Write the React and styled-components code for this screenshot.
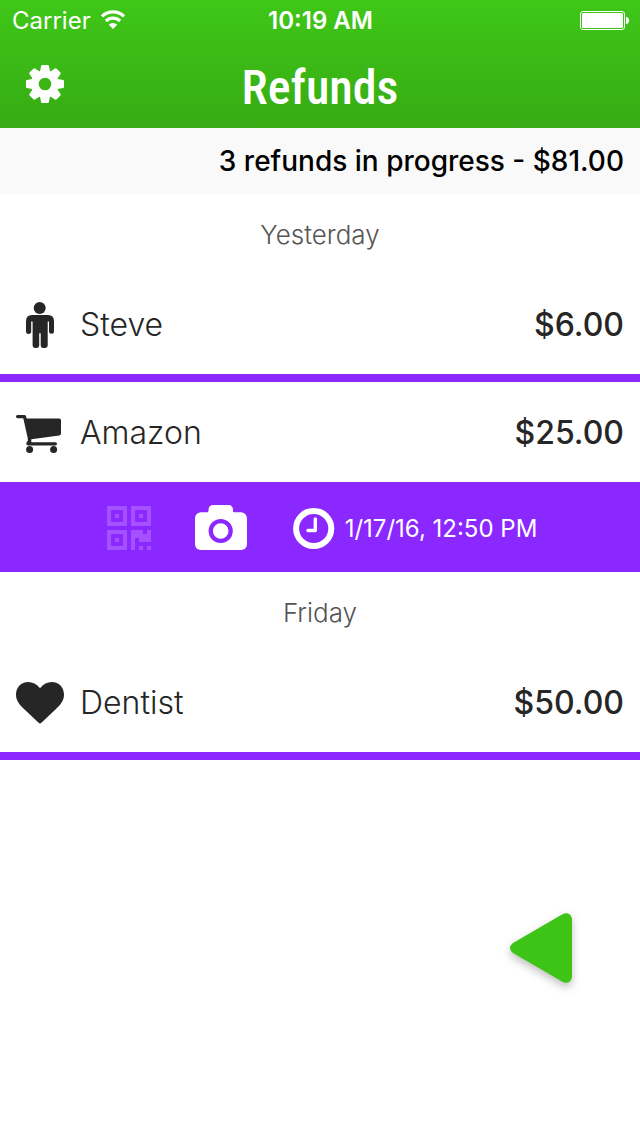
import styled, { createGlobalStyle } from "styled-components";

const groups = [
    {
        day: "Yesterday",
        refunds: [
            { name: "Steve", amount: "$6.00", icon: PersonIcon },
            { name: "Amazon", amount: "$25.00", icon: CartIcon, date: "1/17/16, 12:50 PM" },
        ],
    },
    {
        day: "Friday",
        refunds: [{ name: "Dentist", amount: "$50.00", icon: HeartIcon }],
    },
];

export default function App() {
    return (
        <Screen>
            <GlobalStyle />
            <Header>
                <StatusBar>
                    <Carrier>
                        Carrier
                        <WifiIcon />
                    </Carrier>
                    <Clock>10:19 AM</Clock>
                    <BatteryIcon />
                </StatusBar>
                <NavBar>
                    <IconButton aria-label="Settings">
                        <GearIcon />
                    </IconButton>
                    <Title>Refunds</Title>
                </NavBar>
            </Header>
            <Summary>3 refunds in progress - $81.00</Summary>
            <main>
                {groups.map((group) => (
                    <section key={group.day}>
                        <Day>{group.day}</Day>
                        {group.refunds.map((refund) => (
                            <Refund key={refund.name} {...refund} />
                        ))}
                    </section>
                ))}
            </main>
            <AddButton aria-label="Add refund">
                <TriangleIcon />
            </AddButton>
        </Screen>
    );
}

function Refund({ name, amount, icon: Icon, date }) {
    return (
        <>
            <Row $open={Boolean(date)}>
                <RowIcon>
                    <Icon />
                </RowIcon>
                <Name>{name}</Name>
                <Amount>{amount}</Amount>
            </Row>
            {date && (
                <Actions>
                    <IconButton aria-label="Scan code" disabled>
                        <QrIcon />
                    </IconButton>
                    <IconButton aria-label="Take photo">
                        <CameraIcon />
                    </IconButton>
                    <DateButton>
                        <ClockIcon />
                        {date}
                    </DateButton>
                </Actions>
            )}
        </>
    );
}

function WifiIcon() {
    return (
        <svg width="24" height="18" viewBox="0 0 24 18" fill="none" stroke="#fff" strokeWidth="3.2">
            <path d="M1 5.4a15.6 15.6 0 0 1 22 0" />
            <path d="M4.9 10a10 10 0 0 1 14.2 0" />
            <path d="M12 18l-4.2-4.2a6 6 0 0 1 8.4 0z" fill="#fff" stroke="none" />
        </svg>
    );
}

function BatteryIcon() {
    return (
        <svg width="49" height="19" viewBox="0 0 49 19" fill="#fff">
            <rect x="0.5" y="0.5" width="44" height="18" rx="2.5" fill="none" stroke="#fff" />
            <rect x="2" y="2" width="41" height="15" rx="1.5" />
            <path d="M46 6c2 0 3 1.4 3 3.5S48 13 46 13z" />
        </svg>
    );
}

function GearIcon() {
    const teeth = [0, 45, 90, 135, 180, 225, 270, 315];
    return (
        <svg width="38" height="38" viewBox="-19 -19 38 38" fill="#fff">
            <circle r="10" fill="none" stroke="#fff" strokeWidth="7.4" />
            {teeth.map((angle) => (
                <path
                    key={angle}
                    transform={`rotate(${angle})`}
                    d="M-5.2-11.6L-3.9-18Q-3.7-19-2.9-19H2.9Q3.7-19 3.9-18L5.2-11.6z"
                />
            ))}
        </svg>
    );
}

function PersonIcon() {
    return (
        <svg width="28" height="46" viewBox="0 0 28 46" fill="currentColor">
            <circle cx="13.7" cy="6" r="6" />
            <path d="M6 13H22Q28 13 28 19V29.3a2.5 2.5 0 0 1-5 0V19.4H21.7V43.6Q21.7 46 19.3 46H17Q14.7 46 14.7 43.6V31.3H13.2V43.6Q13.2 46 10.8 46H9Q6.6 46 6.6 43.6V19.4H5.2V29.3a2.6 2.6 0 0 1-5.2 0V19Q0 13 6 13z" />
        </svg>
    );
}

function CartIcon() {
    return (
        <svg width="48" height="40" viewBox="0 -2 48 40" fill="currentColor">
            <path d="M1.5 0H8.3Q9.7 0 10.1 1.4L10.7 3.5H43.2Q45 3.5 45 5.3V18.5Q45 20.2 43.2 20.5L15.3 24.2V27.2H39.4Q41 27.2 41 28.8T39.4 30.5H12.3Q10.3 30.5 10.3 28.7T11.8 26V23.5L7.3 3.2H1.5A1.5 1.6 0 0 1 1.5 0z" />
            <circle cx="13.6" cy="34.4" r="3.5" />
            <circle cx="37.6" cy="34.4" r="3.5" />
        </svg>
    );
}

function HeartIcon() {
    return (
        <svg width="48" height="42" viewBox="0 0 48 42" fill="currentColor">
            <path d="M24 6.3C20.8 2.1 16.5 0 12.2 0C5.2 0 0 5.5 0 12.4C0 18.5 3.2 22.2 8 27L22.6 40.8Q24 42 25.4 40.8L40 27C44.8 22.2 48 18.5 48 12.4C48 5.5 42.8 0 35.8 0C31.5 0 27.2 2.1 24 6.3z" />
        </svg>
    );
}

function QrIcon() {
    return (
        <svg width="44" height="44" viewBox="0 0 44 44" fill="currentColor" fillRule="evenodd">
            <path d="M0 0H20V20H0zM4 4V16H16V4zM8 8H12V12H8z" />
            <path d="M24 0H44V20H24zM28 4V16H40V4zM32 8H36V12H32z" />
            <path d="M0 24H20V44H0zM4 28V40H16V28zM8 32H12V36H8z" />
            <path d="M24 24H36V28H40V24H44V36H32V32H28V44H24zM32 40H36V44H32zM40 40H44V44H40z" />
        </svg>
    );
}

function CameraIcon() {
    return (
        <svg width="54" height="46" viewBox="0 0 54 46" fill="currentColor" fillRule="evenodd">
            <path d="M18.5 0H33C36.5 0 38 2 38 5V6C38 7 38.5 7.3 39.5 7.3H45C49.5 7.3 52 10 52 14V38.5C52 43 49.5 45 45 45H7C2.5 45 0 43 0 38.5V14C0 10 2.5 7.3 7 7.3H11.5C12.8 7.3 13.5 6.8 13.5 5.5C13.5 2 15 0 18.5 0zM25.7 13.9a12.1 12.1 0 1 0 0 24.2a12.1 12.1 0 1 0 0-24.2zM25.7 18.2a7.8 7.8 0 1 1 0 15.6a7.8 7.8 0 1 1 0-15.6z" />
        </svg>
    );
}

function ClockIcon() {
    return (
        <svg width="42" height="42" viewBox="0 0 42 42" fill="none" stroke="currentColor">
            <circle cx="20.7" cy="21.5" r="17.6" strokeWidth="6" />
            <path d="M22.3 12V23.5H15" strokeWidth="3.4" strokeLinecap="round" strokeLinejoin="round" />
        </svg>
    );
}

function TriangleIcon() {
    return (
        <svg width="62" height="70" viewBox="0 0 62 70" fill="#3dc416">
            <path d="M3 30L52 1.5C57-1.5 62 1 62 7V63C62 69 57 71.5 52 68.5L3 40Q-3 35 3 30z" />
        </svg>
    );
}

const GlobalStyle = createGlobalStyle`
    * {
        box-sizing: border-box;
    }

    body {
        margin: 0;
        background-color: #fff;
        color: #262626;
        font-family: "Inter", sans-serif;
    }

    svg {
        display: block;
        flex-shrink: 0;
        overflow: visible;
    }
`;

const Screen = styled.div`
    position: relative;
    min-height: 100vh;
`;

const Header = styled.header`
    background: linear-gradient(#3fc718, #37ab14);
    color: #fff;
`;

const StatusBar = styled.div`
    display: grid;
    grid-template-columns: 1fr auto 1fr;
    align-items: center;
    height: 40px;
    padding: 0 11px 0 12px;
    font-size: 24px;

    > svg {
        justify-self: end;
    }
`;

const Carrier = styled.div`
    display: flex;
    align-items: center;
    gap: 10px;
`;

const Clock = styled.time`
    font-weight: 600;
`;

const NavBar = styled.div`
    display: grid;
    grid-template-columns: 1fr auto 1fr;
    align-items: center;
    height: 88px;
    padding: 0 26px;
`;

const Title = styled.h1`
    margin: 0;
    padding-top: 8px;
    font-family: "Marker Felt", "Roboto Condensed", "Roboto", sans-serif;
    font-size: 48px;
    font-weight: 500;
    line-height: 56px;
`;

const IconButton = styled.button`
    display: flex;
    justify-self: start;
    padding: 0;
    border: 0;
    background: none;
    color: #fff;
    cursor: pointer;

    &:disabled {
        color: #a651ff;
        cursor: default;
    }
`;

const Summary = styled.div`
    padding: 16px;
    background-color: #f9f9f9;
    color: #000;
    font-size: 28px;
    font-weight: 500;
    line-height: 34px;
    text-align: right;
`;

const Day = styled.h2`
    margin: 0;
    padding-top: 2px;
    color: #555;
    font-size: 26px;
    font-weight: 300;
    line-height: 78px;
    text-align: center;
`;

const Row = styled.div`
    display: flex;
    align-items: center;
    padding: 2px 16px 0;
    border-bottom: ${({ $open }) => ($open ? "0" : "8px solid #8b27ff")};
    font-size: 32px;
    line-height: 98px;
`;

const RowIcon = styled.span`
    display: flex;
    justify-content: center;
    width: 48px;
    margin-right: 16px;
`;

const Name = styled.span`
    flex: 1;
    font-weight: 300;
`;

const Amount = styled.span`
    font-weight: 500;
`;

const Actions = styled.div`
    display: flex;
    align-items: center;
    justify-content: center;
    gap: 44px;
    height: 90px;
    padding: 2px 0 0 4px;
    background-color: #8b27ff;
`;

const DateButton = styled(IconButton)`
    align-items: center;
    gap: 10px;
    font-family: "Inter", sans-serif;
    font-size: 24px;
`;

const AddButton = styled(IconButton)`
    position: absolute;
    right: 68px;
    bottom: 153px;

    svg {
        filter: drop-shadow(0 4px 4px rgba(0, 0, 0, 0.25));
    }
`;
